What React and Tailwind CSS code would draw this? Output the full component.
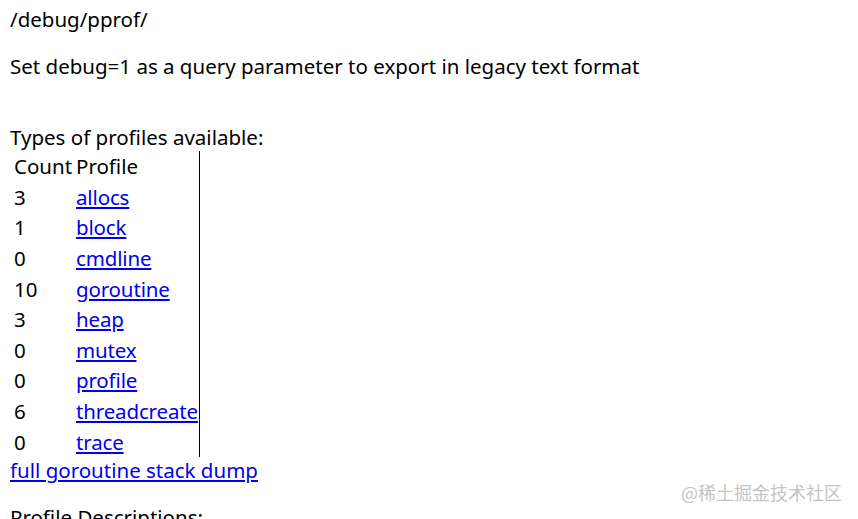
const profiles = [
  { count: 3, name: 'allocs' },
  { count: 1, name: 'block' },
  { count: 0, name: 'cmdline' },
  { count: 10, name: 'goroutine' },
  { count: 3, name: 'heap' },
  { count: 0, name: 'mutex' },
  { count: 0, name: 'profile' },
  { count: 6, name: 'threadcreate' },
  { count: 0, name: 'trace' },
];

const App = () => {
  return (
    <div className="relative h-[519px] w-[858px] overflow-hidden bg-white px-[10px] pt-[7px] font-['Noto_Sans',sans-serif] text-[20.5px] leading-[24px] text-black">
      <div>/debug/pprof/</div>
      <p className="mt-[23px]">Set debug=1 as a query parameter to export in legacy text format</p>
      <div className="mt-[23px] h-[24px]" />
      <div>Types of profiles available:</div>

      <div className="mt-[2px] w-[190px] border-r border-black pl-[4px]">
        <div className="grid h-[30.6px] grid-cols-[62px_1fr] items-center">
          <span>Count</span>
          <span>Profile</span>
        </div>
        {profiles.map((p) => (
          <div key={p.name} className="grid h-[30.6px] grid-cols-[62px_1fr] items-center">
            <span>{p.count}</span>
            <a href="#" className="tracking-[-0.15px] text-[#0000ee] underline">
              {p.name}
            </a>
          </div>
        ))}
      </div>

      <a href="#" className="mt-[1px] block text-[#0000ee] underline">
        full goroutine stack dump
      </a>
      <p className="mt-[23px]">Profile Descriptions:</p>

      <div className="absolute right-[16px] top-[480px] font-['Noto_Sans_CJK_SC',sans-serif] text-[18px] leading-[24px] text-[#c4c4c4]">
        @稀土掘金技术社区
      </div>
    </div>
  );
};

export default App;
